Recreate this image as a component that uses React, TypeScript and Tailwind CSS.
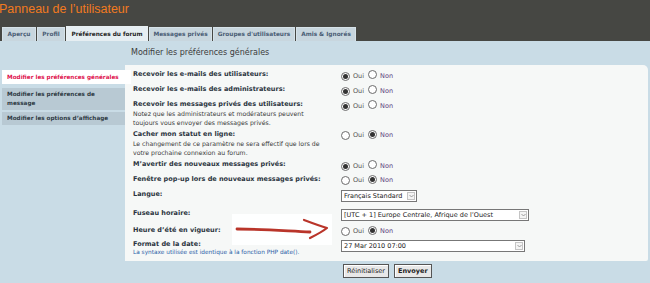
import React from 'react'

const tabs = [
  { label: 'Aperçu', w: 'w-[34px]' },
  { label: 'Profil', w: 'w-[28px]' },
  { label: 'Préférences du forum', w: 'w-[82px]', active: true },
  { label: 'Messages privés', w: 'w-[63px]' },
  { label: "Groupes d'utilisateurs", w: 'w-[82px]' },
  { label: 'Amis & Ignorés', w: 'w-[60px]' },
]

function Radio({ checked }: { checked?: boolean }) {
  return (
    <span className="inline-flex h-[9px] w-[9px] items-center justify-center rounded-full border border-[#6b6b6b] bg-white">
      {checked && <span className="h-[5px] w-[5px] rounded-full bg-[#333]" />}
    </span>
  )
}

function YesNo({ yes }: { yes: boolean }) {
  return (
    <div className="flex items-center text-[6.5px]">
      <Radio checked={yes} />
      <span className="ml-[3px] text-[#555]">Oui</span>
      <span className="ml-[4px]"><Radio checked={!yes} /></span>
      <span className="ml-[3px] text-[#5b3f7d]">Non</span>
    </div>
  )
}

function Select({ value, w }: { value: string; w: string }) {
  return (
    <div className={`flex h-[12px] items-stretch border border-[#777] bg-white ${w}`}>
      <span className="flex-1 truncate pl-[2px] text-[6.5px] leading-[10px] text-[#222]">{value}</span>
      <span className="my-[1px] mr-[1px] flex w-[8px] items-center justify-center border border-[#c4c4c4] bg-[#f4f4f4]">
        <svg width="5" height="4" viewBox="0 0 5 4">
          <path d="M0.5 1 L2.5 3 L4.5 1" stroke="#888" strokeWidth="0.8" fill="none" />
        </svg>
      </span>
    </div>
  )
}

function Row({ label, note, children, h = 'h-[15px]' }: { label: string; note?: string[]; children: React.ReactNode; h?: string }) {
  return (
    <div className={`grid grid-cols-[208px_1fr] ${h}`}>
      <div>
        <div className="text-[6.5px] font-bold leading-[9px] text-[#2b3440]">{label}</div>
        {note && note.map((n) => (
          <div key={n} className="text-[6.2px] leading-[9px] text-[#3a3a3a]">{n}</div>
        ))}
      </div>
      <div>{children}</div>
    </div>
  )
}

export default function App() {
  return (
    <div className="h-[283px] w-[650px] overflow-hidden bg-[#c9dce6] font-['DejaVu_Sans',sans-serif]">
      {/* header */}
      <div className="flex h-[41px] flex-col justify-between bg-[#464743]">
        <div className="ml-[-1px] pt-[2px] font-['Liberation_Sans',sans-serif] text-[12.5px] leading-[15px] text-[#f27a1f]">
          Panneau de l’utilisateur
        </div>
        <div className="flex items-end pl-[2px]">
          {tabs.map((t) => (
            <div
              key={t.label}
              className={`mr-[1px] flex items-center justify-center border border-b-0 text-[5.8px] font-bold ${t.w} ${
                t.active
                  ? 'h-[15px] border-[#e9f0f3] bg-[#e6eef2] text-[#222]'
                  : 'h-[14px] border-[#d6e2e8] bg-[#c8d6de] text-[#4a5d75]'
              }`}
            >
              {t.label}
            </div>
          ))}
        </div>
      </div>

      {/* body */}
      <div className="relative flex pt-[7px]">
        <div className="w-[125px] shrink-0 pl-[2px] pt-[22px]">
          <div className="relative z-10 mr-[-6px] h-[14px] bg-white pl-[5px] text-[5.7px] font-bold leading-[14px] text-[#e0134f]">
            Modifier les préférences générales
          </div>
          <div className="mt-[4px] bg-[#b8c9d3] px-[5px] py-[2px] text-[5.7px] font-bold leading-[9px] text-[#2e3a44]">
            Modifier les préférences de<br />message
          </div>
          <div className="mt-[2px] bg-[#b8c9d3] px-[5px] py-[2px] text-[5.7px] font-bold leading-[9px] text-[#2e3a44]">
            Modifier les options d’affichage
          </div>
        </div>

        <div className="flex-1 pr-[2px]">
          <div className="pl-[6px] text-[8px] leading-[10px] text-[#3b3b3b]">Modifier les préférences générales</div>
          <div className="mt-[7px] h-[196px] rounded-tr-[5px] rounded-br-[2px] bg-[#f6f8f7] pl-[8px] pt-[5px]">
            <Row label="Recevoir les e-mails des utilisateurs:"><YesNo yes /></Row>
            <Row label="Recevoir les e-mails des administrateurs:"><YesNo yes /></Row>
            <Row
              label="Recevoir les messages privés des utilisateurs:"
              note={['Notez que les administrateurs et modérateurs peuvent', 'toujours vous envoyer des messages privés.']}
              h="h-[30px]"
            >
              <YesNo yes />
            </Row>
            <Row
              label="Cacher mon statut en ligne:"
              note={['Le changement de ce paramètre ne sera effectif que lors de', 'votre prochaine connexion au forum.']}
              h="h-[30px]"
            >
              <YesNo yes={false} />
            </Row>
            <Row label="M’avertir des nouveaux messages privés:"><YesNo yes /></Row>
            <Row label="Fenêtre pop-up lors de nouveaux messages privés:"><YesNo yes={false} /></Row>
            <Row label="Langue:" h="h-[19px]"><Select value="Français Standard" w="w-[76px]" /></Row>
            <Row label="Fuseau horaire:" h="h-[17px]"><Select value="[UTC + 1] Europe Centrale, Afrique de l’Ouest" w="w-[188px]" /></Row>
            <Row label="Heure d’été en vigueur:" h="h-[14px]"><YesNo yes={false} /></Row>
            <Row label="Format de la date:" h="h-[8px]">
              <Select value="27 Mar 2010 07:00" w="w-[184px]" />
            </Row>
            <div className="text-[5.8px] leading-[8px] text-[#2d5fa8]">La syntaxe utilisée est identique à la fonction PHP date().</div>
          </div>
          <div className="mt-[3px] flex gap-[5px] pl-[218px]">
            <button className="h-[14px] border border-[#555] bg-[#e8e8e8] px-[3px] text-[6.5px] leading-[12px] text-[#222] shadow-[inset_1px_1px_0_#fff]">Réinitialiser</button>
            <button className="h-[14px] border border-[#555] bg-[#e8e8e8] px-[3px] text-[6.5px] font-bold leading-[12px] text-[#222] shadow-[inset_1px_1px_0_#fff]">Envoyer</button>
          </div>
        </div>

        {/* annotation arrow */}
        <svg className="absolute left-[232px] top-[172px]" width="100" height="33" viewBox="0 0 100 33">
          <rect x="0" y="1" width="100" height="31" fill="#fff" opacity="0.9" />
          <path d="M5 16 C30 16 55 18 78 19" stroke="#b9352a" strokeWidth="2.8" fill="none" strokeLinecap="round" />
          <path d="M72 7 C80 10 88 13 95 15 C90 19 84 22 78 25" stroke="#b9352a" strokeWidth="2.2" fill="none" strokeLinecap="round" strokeLinejoin="round" />
        </svg>
      </div>
    </div>
  )
}
